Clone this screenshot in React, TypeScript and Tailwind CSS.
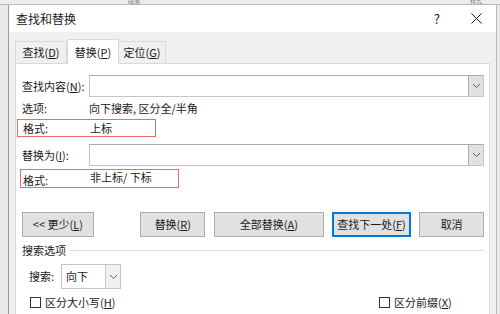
const font = "font-['Microsoft_YaHei','Noto_Sans_CJK_SC',sans-serif]"

function Chevron() {
  return (
    <svg width="9" height="6" viewBox="0 0 9 6" fill="none">
      <path d="M1 1l3.5 3.5L8 1" stroke="#606060" strokeWidth="1" />
    </svg>
  )
}

function Combo() {
  return (
    <div className="flex h-[22px] flex-1 border border-[#c4c4c4] border-t-[#ababab] bg-white">
      <div className="flex-1" />
      <div className="flex w-[15px] items-center justify-center border-l border-[#adadad] bg-[#e1e1e1]">
        <Chevron />
      </div>
    </div>
  )
}

function Btn({ children, w, focus }: { children: React.ReactNode; w: string; focus?: boolean }) {
  return (
    <div
      className={`flex h-[25px] items-center justify-center whitespace-nowrap bg-[#e1e1e1] text-[11px] text-[#1a1a1a] ${w} ${
        focus ? "border-2 border-[#0078d7]" : "border border-[#adadad]"
      }`}
    >
      {children}
    </div>
  )
}

export default function App() {
  return (
    <div className={`${font} relative h-[314px] w-[500px] overflow-hidden bg-[#e9e9e9] text-[11px] text-[#1a1a1a]`}>
      <div className="flex h-[5px] items-end border-b border-[#b8b8b8] bg-[#ececec] text-[6px] leading-none text-[#777]">
        <span className="ml-[128px]">段落</span>
        <span className="ml-[330px]">样式</span>
      </div>
      <div className="flex">
        <div className="w-[8px]" />
        <div className="flex w-[489px] flex-col border-l border-[#9a9a9a] border-r border-r-[#bcbcbc]">
          {/* title bar */}
          <div className="flex h-[27px] items-center bg-white pl-[7px] pr-[14px] text-[12px]">
            <span>查找和替换</span>
            <span className="ml-auto mr-[31px] text-[13px]">?</span>
            <svg width="11" height="11" viewBox="0 0 11 11">
              <path d="M0.5 0.5l10 10M10.5 0.5l-10 10" stroke="#222" strokeWidth="1" />
            </svg>
          </div>
          {/* body */}
          <div className="flex h-[282px] flex-col bg-[#f0f0f0] px-[6px]">
            <div className="flex h-[31px] items-end whitespace-nowrap">
              <div className="flex h-[22px] w-[52px] items-center justify-center border border-b-0 border-[#d9d9d9] bg-[#f0f0f0]">
                查找(<u>D</u>)
              </div>
              <div className="relative z-10 -mb-px flex h-[25px] w-[52px] items-center justify-center border border-b-0 border-[#d9d9d9] bg-white">
                替换(<u>P</u>)
              </div>
              <div className="flex h-[22px] w-[47px] items-center justify-center border border-b-0 border-l-0 border-[#d9d9d9] bg-[#f0f0f0]">
                定位(<u>G</u>)
              </div>
            </div>
            <div className="flex flex-1 flex-col whitespace-nowrap border border-b-0 border-[#d9d9d9] bg-white pl-[6px] pr-[5px] pt-[11px]">
              <div className="flex items-center">
                <span className="w-[67px]">查找内容(<u>N</u>):</span>
                <Combo />
              </div>
              <div className="flex h-[22px] items-center">
                <span className="w-[67px]">选项:</span>
                <span>向下搜索, 区分全/半角</span>
              </div>
              <div className="-ml-[5px] flex h-[18px] w-[139px] items-center border border-[#f06a6a] pl-[5px]">
                <span className="w-[67px]">格式:</span>
                <span>上标</span>
              </div>
              <div className="mt-[7px] flex items-center">
                <span className="w-[67px]">替换为(<u>I</u>):</span>
                <Combo />
              </div>
              <div className="-ml-[2px] mt-[3px] flex h-[19px] w-[159px] border border-[#f06a6a] pl-[2px]">
                <span className="w-[67px] self-end leading-[14px]">格式:</span>
                <span className="-mt-[1px] leading-[16px]">非上标/ 下标</span>
              </div>
              <div className="mt-[24px] flex items-center">
                <Btn w="w-[72px]">&lt;&lt; 更少(<u>L</u>)</Btn>
                <div className="w-[47px]" />
                <Btn w="w-[65px]">替换(<u>R</u>)</Btn>
                <div className="w-[9px]" />
                <Btn w="w-[110px]">全部替换(<u>A</u>)</Btn>
                <div className="w-[8px]" />
                <Btn w="w-[80px]" focus>
                  查找下一处(<u>F</u>)
                </Btn>
                <div className="w-[8px]" />
                <Btn w="w-[65px]">取消</Btn>
              </div>
              <div className="mt-[4px] flex h-[18px] items-center">
                <span>搜索选项</span>
                <div className="ml-[4px] h-px flex-1 bg-[#dcdcdc]" />
              </div>
              <div className="mt-[5px] flex items-center pl-[7px]">
                <span className="w-[32px]">搜索:</span>
                <div className="flex h-[25px] w-[60px] border border-[#c4c4c4] bg-white">
                  <span className="flex flex-1 items-center pl-[4px]">向下</span>
                  <div className="flex w-[15px] items-center justify-center border-l border-[#c4c4c4] bg-[#f0f0f0]">
                    <Chevron />
                  </div>
                </div>
              </div>
              <div className="mt-[5px] flex h-[16px] items-center pl-[8px]">
                <div className="h-[11px] w-[11px] border border-[#333] bg-white" />
                <span className="ml-[4px] w-[334px]">区分大小写(<u>H</u>)</span>
                <div className="h-[11px] w-[11px] border border-[#333] bg-white" />
                <span className="ml-[4px]">区分前缀(<u>X</u>)</span>
              </div>
            </div>
          </div>
        </div>
      </div>
    </div>
  )
}
